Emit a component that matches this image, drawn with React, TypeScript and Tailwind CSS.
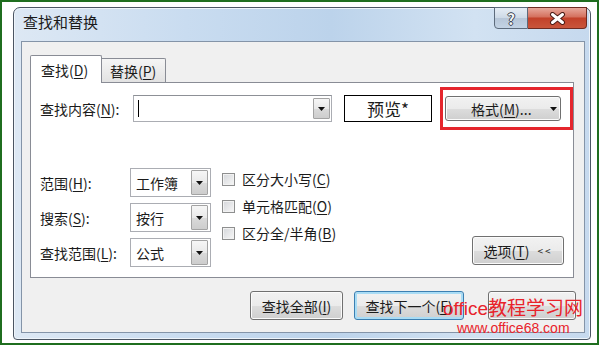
import React from "react";

function Arrow() {
  return (
    <svg width="7" height="4" viewBox="0 0 7 4">
      <path d="M0 0h7L3.5 4z" fill="#111" />
    </svg>
  );
}

function DropBtn({ className }: { className: string }) {
  return (
    <div
      className={
        "flex w-[17px] items-center justify-center rounded-[1px] border border-[#a3a3a3] bg-[linear-gradient(#f6f6f6,#e9e9e9_50%,#dadada_51%,#cdcdcd)] " +
        className
      }
    >
      <Arrow />
    </div>
  );
}

function Combo({ text }: { text: string }) {
  return (
    <div className="flex h-[29px] w-[81px] items-center border border-[#abadb3] bg-white pl-[5px] pr-[2px]">
      <span className="text-[14px] leading-none">{text}</span>
      <DropBtn className="ml-auto h-[25px]" />
    </div>
  );
}

function Check({ children }: { children: React.ReactNode }) {
  return (
    <div className="flex h-[22px] items-center gap-[7px]">
      <div className="h-[13px] w-[13px] border border-[#8e8f8f] bg-[linear-gradient(135deg,#d4d6da,#f7f7f7)] shadow-[inset_0_0_0_1px_#f2f2f2]" />
      <span className="leading-none">{children}</span>
    </div>
  );
}

export default function App() {
  return (
    <div className="relative h-[345px] w-[599px] overflow-hidden border-2 border-[#1f6e1f] bg-white pl-[11px] pt-[5px] font-['Noto_Sans_CJK_SC',sans-serif] text-[14px] text-[#1b1b1b]">
      <div className="flex h-[333px] w-[578px] flex-col rounded-t-[7px] rounded-b-[4px] border border-[#4b5563] bg-[linear-gradient(90deg,#dde8f4_0%,#c9dcf0_30%,#bcd3eb_55%,#d2e2f2_80%,#c6d9ee_100%)] shadow-[inset_0_0_0_1px_#eef4fa]">
        {/* title bar */}
        <div className="flex h-[33px] items-start pr-[3px]">
          <div className="pl-[9px] pt-[4px] text-[15px] leading-[20px] text-[#1a1a1a]">查找和替换</div>
          <div className="-mt-px ml-auto flex h-[22px]">
            <div className="flex w-[34px] items-center justify-center rounded-bl-[4px] border border-[#5d6b7c] bg-[linear-gradient(#e6edf5,#cdd9e6_50%,#b7c6d8_51%,#c3d3e4)] text-[15px] font-bold leading-none text-[#f4f6f8] [text-shadow:1px_0_#3a4350,-1px_0_#3a4350,0_1px_#3a4350,0_-1px_#3a4350]">
              ?
            </div>
            <div className="flex w-[59px] items-center justify-center rounded-br-[4px] border border-l-0 border-[#6e2b22] bg-[linear-gradient(#e7a89c,#d4705d_45%,#c2412a_50%,#c9553b)]">
              <svg width="17" height="13" viewBox="0 0 17 13">
                <path d="M3.5 2.5L13.5 10.5M13.5 2.5L3.5 10.5" stroke="#4a1c16" strokeWidth="5" strokeLinecap="round" />
                <path d="M3.5 2.5L13.5 10.5M13.5 2.5L3.5 10.5" stroke="#fff" strokeWidth="3" strokeLinecap="round" />
              </svg>
            </div>
          </div>
        </div>

        {/* client area */}
        <div className="ml-[7px] mr-[5px] flex h-[292px] flex-col border border-[#8494a8] bg-[#f0f0f0] pl-[8px] pt-[13px]">
          {/* tabs */}
          <div className="flex h-[27px] items-end">
            <div className="relative z-10 -mb-px flex h-[28px] w-[72px] items-center rounded-t-[2px] border border-b-0 border-[#898c95] bg-white pl-[10px] leading-none">
              查找(<span className="underline underline-offset-2">D</span>)
            </div>
            <div className="flex h-[24px] w-[64px] items-center rounded-tr-[2px] border border-b-0 border-l-0 border-[#898c95] bg-[linear-gradient(#f5f5f5,#e2e2e2)] pl-[8px] leading-none">
              替换(<span className="underline underline-offset-2">P</span>)
            </div>
          </div>

          {/* panel */}
          <div className="flex h-[196px] w-[544px] flex-col border border-[#898c95] bg-white">
            {/* row 1 */}
            <div className="mt-[4px] flex h-[43px] items-center pl-[9px]">
              <div className="w-[94px] leading-none">
                查找内容(<span className="underline underline-offset-2">N</span>):
              </div>
              <div className="flex h-[27px] w-[202px] items-center border border-[#abadb3] border-t-[#8d9096] bg-white pr-px">
                <div className="ml-[4px] h-[17px] w-px bg-black" />
                <DropBtn className="ml-auto h-[21px]" />
              </div>
              <div className="ml-[12px] flex h-[27px] w-[89px] items-center justify-center border border-black bg-white text-[17px] leading-none">
                预览*
              </div>
              <div className="ml-[8px] flex h-[43px] w-[133px] shrink-0 items-center border-[3px] border-[#e5262d] pl-[2px]">
                <div className="flex h-[25px] w-[116px] items-center rounded-[3px] border border-[#707070] bg-[linear-gradient(#f2f2f2,#ebebeb_50%,#dddddd_51%,#cfcfcf)] pl-[25px] pr-[3px] shadow-[inset_0_0_0_1px_#fbfbfb]">
                  <span className="leading-none">
                    格式(<span className="underline underline-offset-2">M</span>)...
                  </span>
                  <span className="ml-auto flex">
                    <Arrow />
                  </span>
                </div>
              </div>
            </div>

            {/* rows 2-4 */}
            <div className="mt-[38px] flex pl-[9px]">
              <div className="flex flex-col gap-[6px]">
                <div className="flex items-center">
                  <div className="w-[90px] leading-none">
                    范围(<span className="underline underline-offset-2">H</span>):
                  </div>
                  <Combo text="工作簿" />
                </div>
                <div className="flex items-center">
                  <div className="w-[90px] leading-none">
                    搜索(<span className="underline underline-offset-2">S</span>):
                  </div>
                  <Combo text="按行" />
                </div>
                <div className="flex items-center">
                  <div className="w-[90px] leading-none">
                    查找范围(<span className="underline underline-offset-2">L</span>):
                  </div>
                  <Combo text="公式" />
                </div>
              </div>
              <div className="ml-[11px] flex flex-col gap-[5px]">
                <Check>
                  区分大小写(<span className="underline underline-offset-2">C</span>)
                </Check>
                <Check>
                  单元格匹配(<span className="underline underline-offset-2">O</span>)
                </Check>
                <Check>
                  区分全/半角(<span className="underline underline-offset-2">B</span>)
                </Check>
              </div>
              <div className="mb-[2px] ml-auto mr-[9px] flex h-[29px] w-[92px] items-center justify-center self-end rounded-[3px] border border-[#707070] bg-[linear-gradient(#f2f2f2,#ebebeb_50%,#dddddd_51%,#cfcfcf)] shadow-[inset_0_0_0_1px_#fbfbfb]">
                <span className="leading-none">
                  选项(<span className="underline underline-offset-2">T</span>)
                </span>
                <span className="ml-[8px] text-[10px] leading-none tracking-[2px]">&lt;&lt;</span>
              </div>
            </div>
          </div>

          {/* bottom buttons */}
          <div className="mt-[13px] flex h-[29px] justify-end pr-[8px]">
            <div className="flex w-[93px] items-center justify-center rounded-[3px] border border-[#707070] bg-[linear-gradient(#f2f2f2,#ebebeb_50%,#dddddd_51%,#cfcfcf)] leading-none shadow-[inset_0_0_0_1px_#fbfbfb]">
              查找全部(<span className="underline underline-offset-2">I</span>)
            </div>
            <div className="ml-[11px] flex w-[110px] items-center justify-center rounded-[3px] border border-[#3c7fb1] bg-[linear-gradient(#f2f2f2,#ebebeb_50%,#dddddd_51%,#cfcfcf)] leading-none shadow-[inset_0_0_0_2px_#a9dcf5]">
              查找下一个(<span className="underline underline-offset-2">F</span>)
            </div>
            <div className="ml-[24px] w-[88px] rounded-[3px] border border-[#707070] bg-[linear-gradient(#f2f2f2,#ebebeb_50%,#dddddd_51%,#cfcfcf)] shadow-[inset_0_0_0_1px_#fbfbfb]" />
          </div>
        </div>
      </div>

      {/* watermark */}
      <div className="absolute left-[441px] top-[295px] whitespace-nowrap font-['Liberation_Sans','Noto_Sans_CJK_SC',sans-serif] text-[19px] leading-[24px] text-[#e8232b]">
        office教程学习网
      </div>
      <div className="absolute left-[455px] top-[318px] whitespace-nowrap font-['Liberation_Sans',sans-serif] text-[14px] leading-[16px] text-[#e8232b]">
        www.office68.com
      </div>
    </div>
  );
}
